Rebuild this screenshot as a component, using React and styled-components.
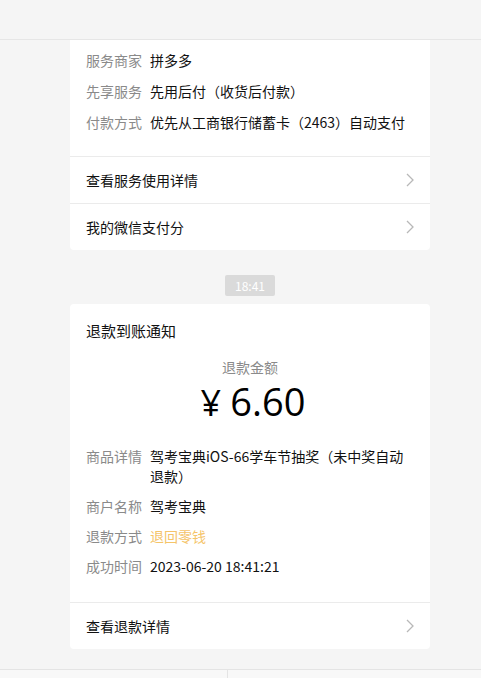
import React from 'react'
import styled, {createGlobalStyle} from 'styled-components'

const GlobalStyle = createGlobalStyle`
	html, body {
		margin: 0;
		padding: 0;
		background: #f5f5f5;
		font-family: "Noto Sans CJK SC", "Noto Sans", sans-serif;
		color: #111;
	}
`

const Page = styled.div`
	width: 481px;
	height: 678px;
	display: flex;
	flex-direction: column;
	overflow: hidden;
`

const TopBar = styled.div`
	height: 39px;
	flex-shrink: 0;
	border-bottom: 1px solid #e6e6e6;
`

const Card = styled.div`
	width: 360px;
	margin-left: 70px;
	background: #fff;
	border-radius: ${p => (p.cut ? '0 0 4px 4px' : '4px')};
	flex-shrink: 0;
`

const InfoList = styled.div`
	display: flex;
	flex-direction: column;
	gap: ${p => p.gap}px;
	padding: ${p => p.pad};
	border-bottom: 1px solid #ebebeb;
`

const InfoRow = styled.div`
	display: flex;
	font-size: 14px;
	line-height: 20px;
`

const Label = styled.span`
	width: 56px;
	flex-shrink: 0;
	margin-right: 8px;
	color: #8a8a8a;
`

const Value = styled.span`
	flex: 1;
	color: ${p => p.color || '#111'};
`

const LinkRow = styled.div`
	height: 46px;
	display: flex;
	align-items: center;
	justify-content: space-between;
	padding: 0 16px;
	font-size: 14px;
	color: #111;
	& + & {
		border-top: 1px solid #ebebeb;
	}
`

const Chevron = () => (
	<svg width="8" height="14" viewBox="0 0 8 14">
		<path d="M1 1l6 6-6 6" fill="none" stroke="#b8b8b8" strokeWidth="1.3" />
	</svg>
)

const TimeWrap = styled.div`
	width: 360px;
	margin-left: 70px;
	display: flex;
	justify-content: center;
	padding: 25px 0 8px;
	flex-shrink: 0;
`

const TimeTag = styled.span`
	width: 50px;
	height: 21px;
	display: flex;
	align-items: center;
	justify-content: center;
	background: #dadada;
	border-radius: 2px;
	color: #fff;
	font-size: 12px;
`

const Title = styled.div`
	padding: 17px 16px 0;
	font-size: 15px;
	line-height: 20px;
`

const AmountLabel = styled.div`
	margin-top: 16px;
	text-align: center;
	font-size: 14px;
	line-height: 20px;
	color: #8a8a8a;
`

const Amount = styled.div`
	margin-top: 2px;
	padding-left: 6px;
	text-align: center;
	font-size: 38px;
	line-height: 44px;
	color: #000;
	font-family: "Open Sans", "Noto Sans CJK SC", sans-serif;
`

const Yen = styled.span`
	font-size: 36px;
	margin-right: 9px;
`

const BottomBar = styled.div`
	margin-top: auto;
	height: 8px;
	border-top: 1px solid #e4e4e4;
	background: #f8f8f8;
	display: grid;
	grid-template-columns: 228px 1fr;
	flex-shrink: 0;
`

const BarCell = styled.div`
	border-right: ${p => (p.divider ? '1px solid #e4e4e4' : 'none')};
`

const App = () => {
	return (
		<Page>
			<GlobalStyle />
			<TopBar />
			<Card cut>
				<InfoList gap={11} pad="10px 16px 24px">
					<InfoRow><Label>服务商家</Label><Value>拼多多</Value></InfoRow>
					<InfoRow><Label>先享服务</Label><Value>先用后付（收货后付款）</Value></InfoRow>
					<InfoRow><Label>付款方式</Label><Value>优先从工商银行储蓄卡（2463）自动支付</Value></InfoRow>
				</InfoList>
				<LinkRow>查看服务使用详情<Chevron /></LinkRow>
				<LinkRow>我的微信支付分<Chevron /></LinkRow>
			</Card>
			<TimeWrap><TimeTag>18:41</TimeTag></TimeWrap>
			<Card>
				<Title>退款到账通知</Title>
				<AmountLabel>退款金额</AmountLabel>
				<Amount><Yen>¥</Yen>6.60</Amount>
				<InfoList gap={10} pad="21px 16px 26px">
					<InfoRow><Label>商品详情</Label><Value>驾考宝典iOS-66学车节抽奖（未中奖自动退款）</Value></InfoRow>
					<InfoRow><Label>商户名称</Label><Value>驾考宝典</Value></InfoRow>
					<InfoRow><Label>退款方式</Label><Value color="#f5c469">退回零钱</Value></InfoRow>
					<InfoRow><Label>成功时间</Label><Value>2023-06-20 18:41:21</Value></InfoRow>
				</InfoList>
				<LinkRow>查看退款详情<Chevron /></LinkRow>
			</Card>
			<BottomBar>
				<BarCell divider />
				<BarCell />
			</BottomBar>
		</Page>
	)
}

export default App
